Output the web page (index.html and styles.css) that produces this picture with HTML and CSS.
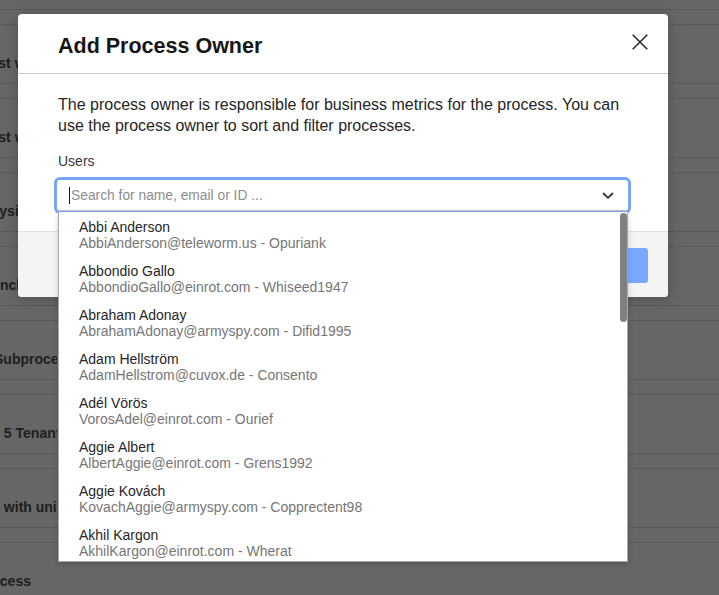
FILE: index.html
```html
<!DOCTYPE html>
<html lang="en">
<head>
<meta charset="utf-8">
<title>Add Process Owner</title>
<link rel="stylesheet" href="styles.css">
</head>
<body>
<div class="page">
  <div class="bg">
    <div class="bg-row"><div class="bg-cell"><span class="bg-text r1">Test with</span></div></div>
    <div class="bg-row"><div class="bg-cell"><span class="bg-text r2">Test with</span></div></div>
    <div class="bg-row"><div class="bg-cell"><span class="bg-text r3">Analysis</span></div></div>
    <div class="bg-row"><div class="bg-cell"><span class="bg-text r4">Launch</span></div></div>
    <div class="bg-row"><div class="bg-cell"><span class="bg-text r5">Subprocess</span></div></div>
    <div class="bg-row"><div class="bg-cell"><span class="bg-text r6">Process 5 Tenants</span></div></div>
    <div class="bg-row"><div class="bg-cell"><span class="bg-text r7">Process with unique</span></div></div>
    <div class="bg-row"><div class="bg-cell"><span class="bg-text r8">Process</span></div></div>
  </div>

  <div class="modal">
    <header class="modal-header">
      <h2 class="modal-title">Add Process Owner</h2>
      <button class="modal-close" aria-label="Close">
        <svg width="16" height="16" viewBox="0 0 16 16"><path d="M0.7 0.7 L15.3 15.3 M15.3 0.7 L0.7 15.3" stroke="#262626" stroke-width="1.5" fill="none"/></svg>
      </button>
    </header>
    <div class="modal-body">
      <p class="modal-text">The process owner is responsible for business metrics for the process. You can use the process owner to sort and filter processes.</p>
      <div class="field-label">Users</div>
      <div class="combo">
        <div class="combo-input">
          <span class="caret"></span>
          <span class="placeholder">Search for name, email or ID ...</span>
          <svg class="chevron" width="12" height="7" viewBox="0 0 12 7"><path d="M1 1 L6 5.8 L11 1" stroke="#333" stroke-width="1.8" fill="none"/></svg>
        </div>
        <div class="listbox">
          <ul class="options">
            <li class="option"><div class="opt-name">Abbi Anderson</div><div class="opt-meta">AbbiAnderson@teleworm.us - Opuriank</div></li>
            <li class="option"><div class="opt-name">Abbondio Gallo</div><div class="opt-meta">AbbondioGallo@einrot.com - Whiseed1947</div></li>
            <li class="option"><div class="opt-name">Abraham Adonay</div><div class="opt-meta">AbrahamAdonay@armyspy.com - Difid1995</div></li>
            <li class="option"><div class="opt-name">Adam Hellström</div><div class="opt-meta">AdamHellstrom@cuvox.de - Consento</div></li>
            <li class="option"><div class="opt-name">Adél Vörös</div><div class="opt-meta">VorosAdel@einrot.com - Ourief</div></li>
            <li class="option"><div class="opt-name">Aggie Albert</div><div class="opt-meta">AlbertAggie@einrot.com - Grens1992</div></li>
            <li class="option"><div class="opt-name">Aggie Kovách</div><div class="opt-meta">KovachAggie@armyspy.com - Copprectent98</div></li>
            <li class="option"><div class="opt-name">Akhil Kargon</div><div class="opt-meta">AkhilKargon@einrot.com - Wherat</div></li>
          </ul>
          <div class="thumb"></div>
        </div>
      </div>
    </div>
    <footer class="modal-footer">
      <button class="btn-primary">Save</button>
    </footer>
  </div>
</div>
</body>
</html>
```

FILE: styles.css
```css
* { box-sizing: border-box; }

html, body {
  margin: 0;
  padding: 0;
}

body {
  font-family: "Liberation Sans", Arial, sans-serif;
  width: 719px;
  height: 595px;
  overflow: hidden;
  background: #666666;
}

.page {
  position: relative;
  width: 719px;
  height: 595px;
  overflow: hidden;
  background: #666666;
}

/* background table */
.bg {
  display: flex;
  flex-direction: column;
  padding-top: 9px;
}

.bg-row {
  height: 74px;
  border-top: 1px solid #5a5a5a;
  padding-top: 14px;
}

.bg-cell {
  border-top: 1px solid #5a5a5a;
  height: 59px;
  padding-top: 30px;
}

.bg-text {
  display: block;
  width: 57px;
  overflow: hidden;
  white-space: nowrap;
  font-size: 14px;
  line-height: 16px;
  font-weight: 700;
  color: #1e1e1e;
}

.r1, .r2 { text-indent: -17px; }
.r3 { text-indent: -31px; }
.r4 { text-indent: -25px; }
.r5 { text-indent: -6px; }
.r6, .r7 { text-indent: -54.5px; }
.r8 { text-indent: -23.5px; }

/* modal */
.modal {
  position: absolute;
  left: 18px;
  top: 14px;
  width: 650px;
  background: #ffffff;
  border-radius: 4px;
  box-shadow: 0 2px 14px rgba(0, 0, 0, 0.22);
}

.modal-header {
  display: flex;
  justify-content: space-between;
  align-items: flex-start;
  height: 60px;
  padding: 0 20px 0 40px;
  border-bottom: 1px solid #c6c6c6;
}

.modal-title {
  margin: 19px 0 0;
  font-size: 21.5px;
  line-height: 26px;
  font-weight: 700;
  color: #161616;
}

.modal-close {
  margin-top: 20px;
  width: 16px;
  height: 16px;
  padding: 0;
  border: 0;
  background: none;
  display: block;
}

.modal-close svg { display: block; }

.modal-body {
  padding: 20px 40px 20px 39px;
}

.modal-text {
  margin: 0 0 0 1px;
  width: 572px;
  font-size: 16px;
  line-height: 21px;
  color: #262626;
}

.field-label {
  margin: 17px 0 0 1px;
  font-size: 14px;
  line-height: 16px;
  color: #393939;
}

.combo {
  position: relative;
  margin-top: 11px;
  width: 571px;
}

.combo-input {
  display: flex;
  align-items: center;
  height: 31px;
  padding: 0 14px 0 12px;
  background: #ffffff;
  border-bottom: 1px solid #c6c6c6;
  outline: 3px solid #78a6fb;
  border-radius: 3px;
}

.caret {
  width: 1px;
  height: 17px;
  background: #161616;
  margin-right: 1px;
}

.placeholder {
  flex: 1;
  font-size: 13.8px;
  color: #8d8d8d;
  white-space: nowrap;
}

.chevron { display: block; }

.listbox {
  position: absolute;
  left: 1px;
  top: 32px;
  width: 570px;
  height: 350px;
  background: #ffffff;
  border: 1px solid #a8a8a8;
  border-top: 0;
  box-shadow: 0 2px 6px rgba(0, 0, 0, 0.18);
  overflow: hidden;
  z-index: 2;
}

.options {
  list-style: none;
  margin: 0;
  padding: 0;
}

.option {
  height: 44px;
  padding: 7px 0 5px 20px;
  white-space: nowrap;
}

.opt-name {
  font-size: 14px;
  line-height: 16px;
  color: #262626;
}

.opt-meta {
  font-size: 14px;
  line-height: 16px;
  color: #767676;
}

.thumb {
  position: absolute;
  right: 0;
  top: 1px;
  width: 7px;
  height: 109px;
  border-radius: 4px;
  background: #808080;
}

.modal-footer {
  display: flex;
  justify-content: flex-end;
  height: 66px;
  padding: 16px 20px 14px;
  background: #f4f4f4;
  border-top: 1px solid #e0e0e0;
  border-radius: 0 0 4px 4px;
}

.btn-primary {
  width: 120px;
  height: 35px;
  border: 0;
  border-radius: 3px;
  background: #78a9ff;
  color: #ffffff;
  font-family: inherit;
  font-size: 14px;
}
```
